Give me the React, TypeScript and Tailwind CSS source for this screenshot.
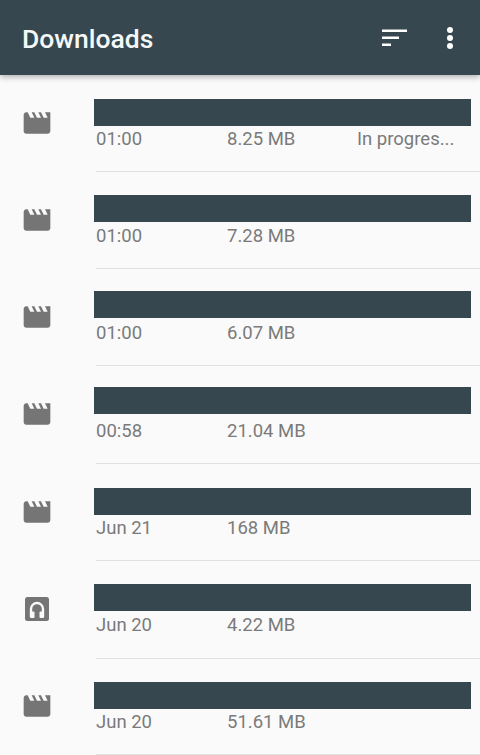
import React from "react";

function Movie() {
  return (
    <svg width="32" height="32" viewBox="0 0 24 24" fill="#757575">
      <path d="M18 4l2 4h-3l-2-4h-2l2 4h-3l-2-4H8l2 4H7L5 4H4c-1.1 0-1.99.9-1.99 2L2 18c0 1.1.9 2 2 2h16c1.1 0 2-.9 2-2V4h-4z" />
    </svg>
  );
}

function Audio() {
  return (
    <svg width="32" height="32" viewBox="0 0 32 32">
      <rect x="4" y="4" width="24" height="24" rx="2.5" fill="#757575" />
      <path d="M10 24v-8a6 6 0 0 1 12 0v8" fill="none" stroke="#fafafa" strokeWidth="2.4" />
      <rect x="9" y="18.5" width="4.5" height="6.5" rx="1" fill="#fafafa" />
      <rect x="18.5" y="18.5" width="4.5" height="6.5" rx="1" fill="#fafafa" />
    </svg>
  );
}

type Row = {
  h: string;
  bar: string;
  gap: string;
  date: string;
  size: string;
  status?: string;
  audio?: boolean;
};

const rows: Row[] = [
  { h: "h-[97px]", bar: "mt-[24px]", gap: "mt-[1px]", date: "01:00", size: "8.25 MB", status: "In progres..." },
  { h: "h-[97px]", bar: "mt-[23px]", gap: "mt-[2px]", date: "01:00", size: "7.28 MB" },
  { h: "h-[97px]", bar: "mt-[22px]", gap: "mt-[3px]", date: "01:00", size: "6.07 MB" },
  { h: "h-[98px]", bar: "mt-[21px]", gap: "mt-[5px]", date: "00:58", size: "21.04 MB" },
  { h: "h-[97px]", bar: "mt-[24px]", gap: "mt-[1px]", date: "Jun 21", size: "168 MB" },
  { h: "h-[98px]", bar: "mt-[23px]", gap: "mt-[2px]", date: "Jun 20", size: "4.22 MB", audio: true },
  { h: "h-[96px]", bar: "mt-[23px]", gap: "mt-[1px]", date: "Jun 20", size: "51.61 MB" },
];

export default function App() {
  return (
    <div className="h-[755px] w-[480px] overflow-hidden bg-[#fafafa] font-['Roboto',sans-serif]">
      <header className="relative z-10 flex h-[75px] items-center bg-[#37474f] pl-[22px] shadow-[0_2px_6px_rgba(0,0,0,0.3)]">
        <h1 className="flex-1 pt-[3px] text-[26.5px] leading-none font-medium text-[#f5f8f8]">Downloads</h1>
        <svg width="25" height="18" viewBox="0 0 25 18" fill="#fff" className="mr-[40px]">
          <rect x="0" y="0.5" width="25" height="2.5" />
          <rect x="0" y="7.5" width="17" height="2.5" />
          <rect x="0" y="14.5" width="9" height="2.5" />
        </svg>
        <svg width="6" height="22" viewBox="0 0 6 22" fill="#fff" className="mr-[27px]">
          <circle cx="3" cy="3" r="3" />
          <circle cx="3" cy="11" r="3" />
          <circle cx="3" cy="19" r="3" />
        </svg>
      </header>
      <main>
        {rows.map((r, i) => (
          <div key={i} className={`flex ${r.h}`}>
            <div className="flex w-[94px] shrink-0 items-center pb-[2px] pl-[21px]">
              {r.audio ? <Audio /> : <Movie />}
            </div>
            <div className="flex min-w-0 flex-1 flex-col">
              <div className={`h-[27px] w-[377px] shrink-0 bg-[#37474f] ${r.bar}`} />
              <div className={`flex h-[24px] pl-[2px] text-[18.5px] leading-[24px] text-[#7a7a7a] ${r.gap}`}>
                <span className="w-[131px]">{r.date}</span>
                <span className="w-[130px]">{r.size}</span>
                {r.status && <span>{r.status}</span>}
              </div>
              <div className="mt-auto ml-[2px] h-px bg-[#e0e0e0]" />
            </div>
          </div>
        ))}
      </main>
    </div>
  );
}
